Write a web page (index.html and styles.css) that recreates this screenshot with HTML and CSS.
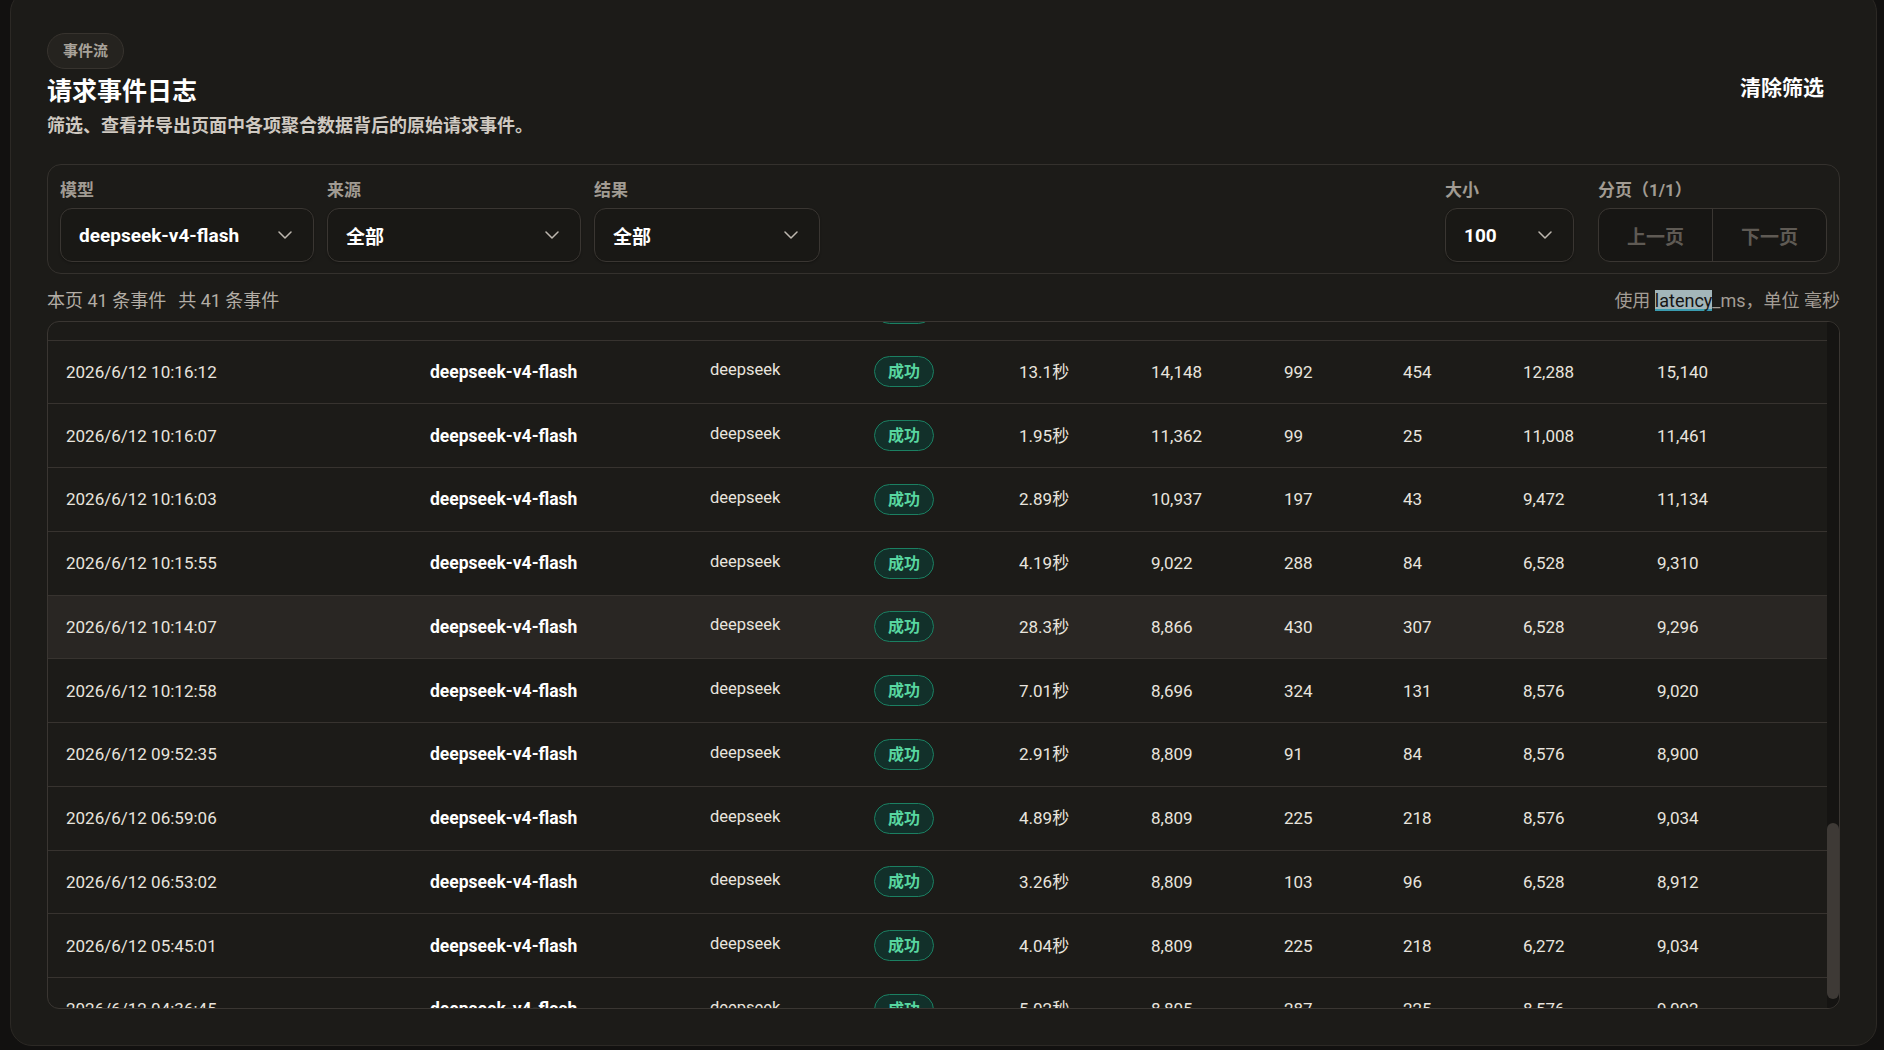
FILE: index.html
```html
<!DOCTYPE html>
<html lang="zh-CN">
<head>
    <meta charset="UTF-8">
    <meta name="viewport" content="width=device-width, initial-scale=1.0">
    <title>请求事件日志</title>
    <link rel="stylesheet" href="styles.css">
</head>
<body>
    <section class="log-card">
        <header class="log-head">
            <div class="log-head-text">
                <span class="tag">事件流</span>
                <h1>请求事件日志</h1>
                <p class="subtitle">筛选、查看并导出页面中各项聚合数据背后的原始请求事件。</p>
            </div>
            <button class="clear-button">清除筛选</button>
        </header>

        <div class="filters">
            <div class="field field-model">
                <label>模型</label>
                <div class="select"><span>deepseek-v4-flash</span><svg class="chev" viewBox="0 0 14 8" width="14" height="8"><path d="M1 1l6 6 6-6" fill="none" stroke="currentColor" stroke-width="1.5" stroke-linecap="round" stroke-linejoin="round"/></svg></div>
            </div>
            <div class="field field-source">
                <label>来源</label>
                <div class="select"><span>全部</span><svg class="chev" viewBox="0 0 14 8" width="14" height="8"><path d="M1 1l6 6 6-6" fill="none" stroke="currentColor" stroke-width="1.5" stroke-linecap="round" stroke-linejoin="round"/></svg></div>
            </div>
            <div class="field field-result">
                <label>结果</label>
                <div class="select"><span>全部</span><svg class="chev" viewBox="0 0 14 8" width="14" height="8"><path d="M1 1l6 6 6-6" fill="none" stroke="currentColor" stroke-width="1.5" stroke-linecap="round" stroke-linejoin="round"/></svg></div>
            </div>
            <div class="filters-right">
                <div class="field field-size">
                    <label>大小</label>
                    <div class="select"><span>100</span><svg class="chev" viewBox="0 0 14 8" width="14" height="8"><path d="M1 1l6 6 6-6" fill="none" stroke="currentColor" stroke-width="1.5" stroke-linecap="round" stroke-linejoin="round"/></svg></div>
                </div>
                <div class="field field-pager">
                    <label>分页（1/1）</label>
                    <div class="pager">
                        <button disabled>上一页</button>
                        <button disabled>下一页</button>
                    </div>
                </div>
            </div>
        </div>

        <div class="summary">
            <div class="summary-count"><span>本页 41 条事件</span><span>共 41 条事件</span></div>
            <div class="summary-note">使用 <span class="picked">latency</span>_ms，单位 毫秒</div>
        </div>

        <div class="table-wrap">
            <div class="table-scroll">
                <table class="events">
                    <colgroup>
                        <col class="c-time"><col class="c-model"><col class="c-source"><col class="c-result"><col class="c-latency">
                        <col class="c-num1"><col class="c-num2"><col class="c-num3"><col class="c-num4"><col class="c-num5">
                    </colgroup>
                    <thead>
                        <tr><th>时间</th><th>模型</th><th>来源</th><th>结果</th><th>延迟</th><th>输入</th><th>输出</th><th>推理</th><th>缓存</th><th>总计</th></tr>
                    </thead>
                    <tbody>
                        <tr><td>2026/6/12 14:52:18</td><td class="model">deepseek-v4-flash</td><td class="src">deepseek</td><td><span class="ok">成功</span></td><td>3.12秒</td><td>15,204</td><td>186</td><td>52</td><td>14,336</td><td>15,390</td></tr>
                        <tr><td>2026/6/12 14:47:03</td><td class="model">deepseek-v4-flash</td><td class="src">deepseek</td><td><span class="ok">成功</span></td><td>2.48秒</td><td>15,018</td><td>143</td><td>38</td><td>14,336</td><td>15,161</td></tr>
                        <tr><td>2026/6/12 14:41:55</td><td class="model">deepseek-v4-flash</td><td class="src">deepseek</td><td><span class="ok">成功</span></td><td>6.77秒</td><td>14,876</td><td>512</td><td>233</td><td>13,824</td><td>15,388</td></tr>
                        <tr><td>2026/6/12 14:30:12</td><td class="model">deepseek-v4-flash</td><td class="src">deepseek</td><td><span class="ok">成功</span></td><td>1.86秒</td><td>14,702</td><td>88</td><td>21</td><td>13,824</td><td>14,790</td></tr>
                        <tr><td>2026/6/12 14:22:40</td><td class="model">deepseek-v4-flash</td><td class="src">deepseek</td><td><span class="ok">成功</span></td><td>9.41秒</td><td>14,655</td><td>701</td><td>388</td><td>13,312</td><td>15,356</td></tr>
                        <tr><td>2026/6/12 14:10:07</td><td class="model">deepseek-v4-flash</td><td class="src">deepseek</td><td><span class="ok">成功</span></td><td>2.05秒</td><td>14,410</td><td>120</td><td>33</td><td>13,312</td><td>14,530</td></tr>
                        <tr><td>2026/6/12 13:58:31</td><td class="model">deepseek-v4-flash</td><td class="src">deepseek</td><td><span class="ok">成功</span></td><td>4.63秒</td><td>14,288</td><td>305</td><td>142</td><td>12,800</td><td>14,593</td></tr>
                        <tr><td>2026/6/12 13:44:19</td><td class="model">deepseek-v4-flash</td><td class="src">deepseek</td><td><span class="ok">成功</span></td><td>3.37秒</td><td>14,102</td><td>211</td><td>76</td><td>12,800</td><td>14,313</td></tr>
                        <tr><td>2026/6/12 13:30:02</td><td class="model">deepseek-v4-flash</td><td class="src">deepseek</td><td><span class="ok">成功</span></td><td>12.4秒</td><td>13,987</td><td>884</td><td>410</td><td>12,800</td><td>14,871</td></tr>
                        <tr><td>2026/6/12 13:12:45</td><td class="model">deepseek-v4-flash</td><td class="src">deepseek</td><td><span class="ok">成功</span></td><td>2.22秒</td><td>13,760</td><td>131</td><td>40</td><td>12,288</td><td>13,891</td></tr>
                        <tr><td>2026/6/12 12:58:11</td><td class="model">deepseek-v4-flash</td><td class="src">deepseek</td><td><span class="ok">成功</span></td><td>5.18秒</td><td>13,544</td><td>366</td><td>197</td><td>12,288</td><td>13,910</td></tr>
                        <tr><td>2026/6/12 12:41:36</td><td class="model">deepseek-v4-flash</td><td class="src">deepseek</td><td><span class="ok">成功</span></td><td>1.74秒</td><td>13,402</td><td>77</td><td>19</td><td>12,288</td><td>13,479</td></tr>
                        <tr><td>2026/6/12 12:20:09</td><td class="model">deepseek-v4-flash</td><td class="src">deepseek</td><td><span class="ok">成功</span></td><td>3.95秒</td><td>13,215</td><td>248</td><td>102</td><td>11,776</td><td>13,463</td></tr>
                        <tr><td>2026/6/12 12:03:50</td><td class="model">deepseek-v4-flash</td><td class="src">deepseek</td><td><span class="ok">成功</span></td><td>7.62秒</td><td>13,090</td><td>547</td><td>260</td><td>11,776</td><td>13,637</td></tr>
                        <tr><td>2026/6/12 11:47:22</td><td class="model">deepseek-v4-flash</td><td class="src">deepseek</td><td><span class="ok">成功</span></td><td>2.61秒</td><td>12,876</td><td>164</td><td>55</td><td>11,776</td><td>13,040</td></tr>
                        <tr><td>2026/6/12 11:35:04</td><td class="model">deepseek-v4-flash</td><td class="src">deepseek</td><td><span class="ok">成功</span></td><td>4.27秒</td><td>12,740</td><td>290</td><td>118</td><td>11,264</td><td>13,030</td></tr>
                        <tr><td>2026/6/12 11:21:48</td><td class="model">deepseek-v4-flash</td><td class="src">deepseek</td><td><span class="ok">成功</span></td><td>2.09秒</td><td>12,598</td><td>112</td><td>31</td><td>11,264</td><td>12,710</td></tr>
                        <tr><td>2026/6/12 11:10:33</td><td class="model">deepseek-v4-flash</td><td class="src">deepseek</td><td><span class="ok">成功</span></td><td>18.6秒</td><td>12,433</td><td>1,206</td><td>640</td><td>11,264</td><td>13,639</td></tr>
                        <tr><td>2026/6/12 11:02:17</td><td class="model">deepseek-v4-flash</td><td class="src">deepseek</td><td><span class="ok">成功</span></td><td>3.48秒</td><td>12,301</td><td>233</td><td>91</td><td>10,752</td><td>12,534</td></tr>
                        <tr><td>2026/6/12 10:55:40</td><td class="model">deepseek-v4-flash</td><td class="src">deepseek</td><td><span class="ok">成功</span></td><td>2.77秒</td><td>12,188</td><td>176</td><td>60</td><td>10,752</td><td>12,364</td></tr>
                        <tr><td>2026/6/12 10:49:06</td><td class="model">deepseek-v4-flash</td><td class="src">deepseek</td><td><span class="ok">成功</span></td><td>5.91秒</td><td>12,054</td><td>402</td><td>215</td><td>10,752</td><td>12,456</td></tr>
                        <tr><td>2026/6/12 10:42:51</td><td class="model">deepseek-v4-flash</td><td class="src">deepseek</td><td><span class="ok">成功</span></td><td>1.93秒</td><td>11,920</td><td>96</td><td>27</td><td>10,240</td><td>12,016</td></tr>
                        <tr><td>2026/6/12 10:37:29</td><td class="model">deepseek-v4-flash</td><td class="src">deepseek</td><td><span class="ok">成功</span></td><td>3.06秒</td><td>11,812</td><td>189</td><td>64</td><td>10,240</td><td>12,001</td></tr>
                        <tr><td>2026/6/12 10:31:14</td><td class="model">deepseek-v4-flash</td><td class="src">deepseek</td><td><span class="ok">成功</span></td><td>8.35秒</td><td>11,705</td><td>610</td><td>301</td><td>10,240</td><td>12,315</td></tr>
                        <tr><td>2026/6/12 10:26:58</td><td class="model">deepseek-v4-flash</td><td class="src">deepseek</td><td><span class="ok">成功</span></td><td>2.34秒</td><td>11,630</td><td>138</td><td>45</td><td>10,240</td><td>11,768</td></tr>
                        <tr><td>2026/6/12 10:23:41</td><td class="model">deepseek-v4-flash</td><td class="src">deepseek</td><td><span class="ok">成功</span></td><td>4.52秒</td><td>11,548</td><td>317</td><td>150</td><td>9,728</td><td>11,865</td></tr>
                        <tr><td>2026/6/12 10:20:15</td><td class="model">deepseek-v4-flash</td><td class="src">deepseek</td><td><span class="ok">成功</span></td><td>1.88秒</td><td>11,490</td><td>90</td><td>22</td><td>9,728</td><td>11,580</td></tr>
                        <tr><td>2026/6/12 10:18:37</td><td class="model">deepseek-v4-flash</td><td class="src">deepseek</td><td><span class="ok">成功</span></td><td>3.71秒</td><td>14,020</td><td>256</td><td>97</td><td>12,288</td><td>14,276</td></tr>
                        <tr><td>2026/6/12 10:17:22</td><td class="model">deepseek-v4-flash</td><td class="src">deepseek</td><td><span class="ok">成功</span></td><td>2.53秒</td><td>13,876</td><td>150</td><td>48</td><td>12,288</td><td>14,026</td></tr>
                        <tr><td>2026/6/12 10:16:40</td><td class="model">deepseek-v4-flash</td><td class="src">deepseek</td><td><span class="ok">成功</span></td><td>6.14秒</td><td>13,650</td><td>433</td><td>210</td><td>12,288</td><td>14,083</td></tr>
                        <tr class="anchor-row"><td>2026/6/12 10:16:12</td><td class="model">deepseek-v4-flash</td><td class="src">deepseek</td><td><span class="ok">成功</span></td><td>13.1秒</td><td>14,148</td><td>992</td><td>454</td><td>12,288</td><td>15,140</td></tr>
                        <tr><td>2026/6/12 10:16:07</td><td class="model">deepseek-v4-flash</td><td class="src">deepseek</td><td><span class="ok">成功</span></td><td>1.95秒</td><td>11,362</td><td>99</td><td>25</td><td>11,008</td><td>11,461</td></tr>
                        <tr><td>2026/6/12 10:16:03</td><td class="model">deepseek-v4-flash</td><td class="src">deepseek</td><td><span class="ok">成功</span></td><td>2.89秒</td><td>10,937</td><td>197</td><td>43</td><td>9,472</td><td>11,134</td></tr>
                        <tr><td>2026/6/12 10:15:55</td><td class="model">deepseek-v4-flash</td><td class="src">deepseek</td><td><span class="ok">成功</span></td><td>4.19秒</td><td>9,022</td><td>288</td><td>84</td><td>6,528</td><td>9,310</td></tr>
                        <tr class="is-hover"><td>2026/6/12 10:14:07</td><td class="model">deepseek-v4-flash</td><td class="src">deepseek</td><td><span class="ok">成功</span></td><td>28.3秒</td><td>8,866</td><td>430</td><td>307</td><td>6,528</td><td>9,296</td></tr>
                        <tr><td>2026/6/12 10:12:58</td><td class="model">deepseek-v4-flash</td><td class="src">deepseek</td><td><span class="ok">成功</span></td><td>7.01秒</td><td>8,696</td><td>324</td><td>131</td><td>8,576</td><td>9,020</td></tr>
                        <tr><td>2026/6/12 09:52:35</td><td class="model">deepseek-v4-flash</td><td class="src">deepseek</td><td><span class="ok">成功</span></td><td>2.91秒</td><td>8,809</td><td>91</td><td>84</td><td>8,576</td><td>8,900</td></tr>
                        <tr><td>2026/6/12 06:59:06</td><td class="model">deepseek-v4-flash</td><td class="src">deepseek</td><td><span class="ok">成功</span></td><td>4.89秒</td><td>8,809</td><td>225</td><td>218</td><td>8,576</td><td>9,034</td></tr>
                        <tr><td>2026/6/12 06:53:02</td><td class="model">deepseek-v4-flash</td><td class="src">deepseek</td><td><span class="ok">成功</span></td><td>3.26秒</td><td>8,809</td><td>103</td><td>96</td><td>6,528</td><td>8,912</td></tr>
                        <tr><td>2026/6/12 05:45:01</td><td class="model">deepseek-v4-flash</td><td class="src">deepseek</td><td><span class="ok">成功</span></td><td>4.04秒</td><td>8,809</td><td>225</td><td>218</td><td>6,272</td><td>9,034</td></tr>
                        <tr><td>2026/6/12 04:36:45</td><td class="model">deepseek-v4-flash</td><td class="src">deepseek</td><td><span class="ok">成功</span></td><td>5.02秒</td><td>8,805</td><td>287</td><td>225</td><td>8,576</td><td>9,092</td></tr>
                    </tbody>
                </table>
            </div>
            <div class="scroll-track"><div class="scroll-thumb"></div></div>
        </div>
    </section>

    <script>
        var scroller = document.querySelector('.table-scroll');
        var anchor = scroller.querySelector('.anchor-row');
        scroller.scrollTop = anchor.offsetTop - 19;

        // custom scrollbar thumb
        var track = document.querySelector('.scroll-track');
        var thumb = document.querySelector('.scroll-thumb');
        var ratio = track.clientHeight / scroller.scrollHeight;
        thumb.style.height = (scroller.clientHeight * ratio) + 'px';
        thumb.style.top = (scroller.scrollTop * ratio) + 'px';
    </script>
</body>
</html>
```

FILE: styles.css
```css
* {
    box-sizing: border-box;
}
body {
    margin: 0;
    height: 100vh;
    overflow: hidden;
    background-color: #121110;
    color: #ece8e2;
    font-family: "Segoe UI", Roboto, "Noto Sans CJK SC", sans-serif;
}
.log-card {
    display: flex;
    flex-direction: column;
    height: 1056px;
    margin: -10px 7px 0 10px;
    padding: 42px 36px 36px;
    background-color: #1c1b18;
    border: 1px solid #2c2925;
    border-radius: 22px;
}

/* header */
.log-head {
    display: flex;
    justify-content: space-between;
    align-items: flex-start;
}
.tag {
    display: inline-block;
    height: 36px;
    padding: 0 15px;
    line-height: 34px;
    font-size: 15px;
    font-weight: 700;
    color: #a8a29a;
    background-color: #25231f;
    border: 1px solid #37332e;
    border-radius: 18px;
}
h1 {
    margin: 7px 0 0;
    font-size: 25px;
    line-height: 32px;
    font-weight: 700;
    color: #fff;
}
.subtitle {
    margin: 6px 0 0;
    font-size: 18px;
    line-height: 24px;
    font-weight: 700;
    color: #cfc9c1;
}
.clear-button {
    margin-top: 37px;
    padding: 6px 16px;
    background: none;
    border: none;
    color: #fff;
    font-family: inherit;
    font-size: 21px;
    line-height: 24px;
    font-weight: 700;
    cursor: pointer;
}

/* filters */
.filters {
    display: flex;
    gap: 13px;
    margin-top: 26px;
    padding: 15px 12px 11px;
    border: 1px solid #34312d;
    border-radius: 14px;
}
.filters-right {
    display: flex;
    gap: 24px;
    margin-left: auto;
}
.field label {
    display: block;
    margin-bottom: 8px;
    font-size: 17px;
    line-height: 20px;
    font-weight: 700;
    color: #a19b93;
}
.field-model, .field-source { width: 254px; }
.field-result { width: 226px; }
.field-size { width: 129px; }
.field-pager { width: 229px; }
.select {
    display: flex;
    justify-content: space-between;
    align-items: center;
    height: 54px;
    padding: 0 21px 0 18px;
    background-color: #191815;
    border: 1px solid #3a3632;
    border-radius: 12px;
    box-shadow: 0 1px 2px rgba(0, 0, 0, 0.25);
    font-size: 19px;
    font-weight: 700;
    color: #fff;
}
.chev {
    color: #bdb7af;
}
.pager {
    display: flex;
    height: 54px;
    background-color: #171614;
    border: 1px solid #3a3632;
    border-radius: 12px;
    overflow: hidden;
}
.pager button {
    flex: 1;
    background: none;
    border: none;
    color: #5f5a54;
    font-family: inherit;
    font-size: 19px;
    font-weight: 700;
}
.pager button + button {
    border-left: 1px solid #3a3632;
}

/* summary line */
.summary {
    display: flex;
    justify-content: space-between;
    margin-top: 15px;
    font-size: 18px;
    line-height: 24px;
    color: #b3ada5;
}
.summary-count span + span {
    margin-left: 12px;
}
.summary-note {
    color: #a39d95;
}
.picked {
    background-color: #a3b6ba;
    color: #151515;
    box-shadow: inset 0 -2px 0 #3a9cb0;
}

/* table */
.table-wrap {
    display: flex;
    flex: 1;
    min-height: 0;
    margin-top: 8px;
    border: 1px solid #3a3632;
    border-radius: 12px;
    overflow: hidden;
}
.table-scroll {
    flex: 1;
    overflow: hidden;
    position: relative;
}
.events {
    width: 100%;
    table-layout: fixed;
    border-collapse: separate;
    border-spacing: 0;
}
.c-time { width: 364px; }
.c-model { width: 280px; }
.c-source { width: 164px; }
.c-result { width: 145px; }
.c-latency { width: 132px; }
.c-num1 { width: 133px; }
.c-num2 { width: 119px; }
.c-num3 { width: 120px; }
.c-num4 { width: 134px; }
.c-num5 { width: 189px; }
.events th {
    height: 52px;
    padding: 0 18px;
    text-align: left;
    font-size: 14px;
    font-weight: 700;
    color: #8f8982;
    border-bottom: 1px solid #37332f;
}
.events td {
    height: 63.75px;
    padding: 0 18px;
    font-size: 17px;
    line-height: 24px;
    color: #e8e4de;
    white-space: nowrap;
    border-bottom: 1px solid #37332f;
    vertical-align: middle;
}
.events td.model {
    font-size: 17.5px;
    font-weight: 700;
    color: #fff;
}
.events td.src {
    font-size: 16.5px;
    padding-bottom: 3px;
}
.events tr.is-hover td {
    background-color: #292623;
}
.ok {
    display: inline-block;
    height: 31px;
    padding: 0 13px;
    line-height: 29px;
    font-size: 16px;
    font-weight: 700;
    color: #58d6a0;
    background-color: #12302a;
    border: 1px solid #1b8062;
    border-radius: 16px;
}
.scroll-track {
    position: relative;
    width: 12px;
    background-color: #151412;
}
.scroll-thumb {
    position: absolute;
    left: 0;
    right: 0;
    background-color: #3e3a36;
    border-radius: 6px;
}
```
